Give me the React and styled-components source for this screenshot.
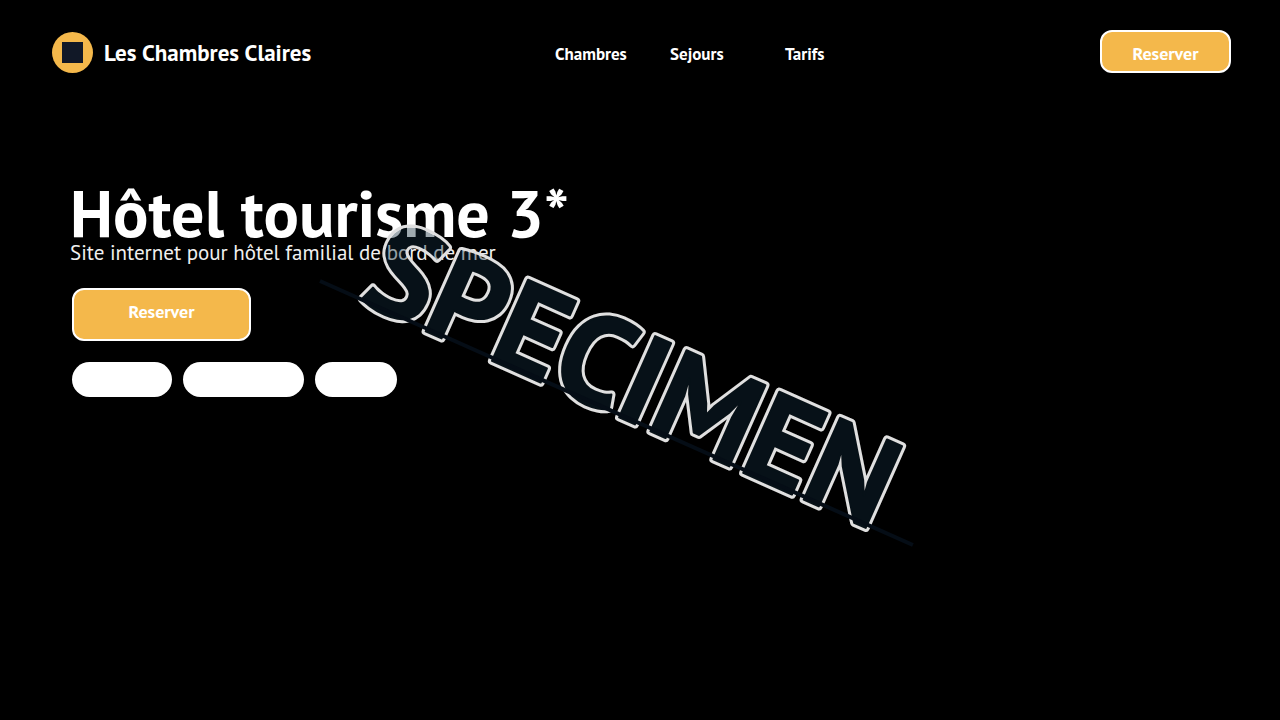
import React from "react";
import styled, { createGlobalStyle } from "styled-components";

const links = ["Chambres", "Sejours", "Tarifs"];
const pills = [100, 121, 82];

export default function App(){
    return (
        <>
            <GlobalStyle />
            <Page>
                <Header>
                    <Brand href="#">
                        <Logo viewBox="0 0 41 41" aria-hidden="true">
                            <circle cx="20.5" cy="20.5" r="20.5" fill="#f4b84b" />
                            <rect x="10" y="10" width="21" height="21" fill="#111827" />
                        </Logo>
                        Les Chambres Claires
                    </Brand>
                    <Nav>
                        {links.map((link) => (
                            <NavLink key={link} href="#">{link}</NavLink>
                        ))}
                    </Nav>
                    <Button $width="131px" $height="43px" $padding="4px 0 0">Reserver</Button>
                </Header>
                <Hero>
                    <Intro>
                        <Title>Hôtel tourisme 3*</Title>
                        <Subtitle>Site internet pour hôtel familial de bord de mer</Subtitle>
                    </Intro>
                    <Button $width="179px" $height="53px" $padding="0 0 6px">Reserver</Button>
                    <Pills>
                        {pills.map((width) => (
                            <Pill key={width} $width={width} />
                        ))}
                    </Pills>
                </Hero>
                <Watermark viewBox="0 0 640 400">
                    <mask id="outline" maskUnits="userSpaceOnUse" x="0" y="-140" width="680" height="180">
                        <use href="#specimen" fill="white" stroke="white" strokeWidth="8" />
                        <use href="#specimen" fill="black" stroke="black" strokeWidth="2" />
                    </mask>
                    <g transform="translate(0 111) rotate(24)">
                        <g opacity="0.4" fill="#122c3c" stroke="#122c3c" strokeWidth="2">
                            <text id="specimen" x="42" y="3">SPECIMEN</text>
                        </g>
                        <rect x="0" y="-140" width="680" height="180" fill="#e0e0e0" mask="url(#outline)" />
                        <line x1="0" y1="0" x2="649" y2="0" />
                    </g>
                </Watermark>
            </Page>
        </>
    )
}

const GlobalStyle = createGlobalStyle`
    body{
        margin: 0;
        background-color: black;
        color: white;
        font-family: "PT Sans", "Open Sans", "Noto Sans", sans-serif;
    }
`;
const Page = styled.div`
    position: relative;
    min-height: 100vh;
    overflow: hidden;
`;
const Header = styled.header`
    display: grid; grid-template-columns: 503px 1fr auto; align-items: end;
    padding: 30px 49px 0 52px;
`;
const Brand = styled.a`
    display: flex; align-items: center; gap: 11px;
    color: white;
    font-size: 23px;
    line-height: 41px;
    font-weight: bold;
    text-decoration: none;
`;
const Logo = styled.svg`
    width: 41px;
    height: 41px;
`;
const Nav = styled.nav`
    display: grid; grid-template-columns: repeat(3, 115px);
    line-height: 38px;
`;
const NavLink = styled.a`
    color: white;
    font-size: 17px;
    font-weight: bold;
    text-decoration: none;
`;
const Button = styled.button`
    box-sizing: border-box;
    width: ${({ $width }) => $width};
    height: ${({ $height }) => $height};
    padding: ${({ $padding }) => $padding};
    border: 2px solid white;
    border-radius: 12px;
    background-color: #f4b84b;
    color: white;
    font-family: inherit;
    font-size: 18px;
    font-weight: bold;
`;
const Hero = styled.main`
    padding: 109px 72px 0;
`;
const Intro = styled.div`
    margin: 0 0 26px -2px;
`;
const Title = styled.h1`
    margin: 0;
    font-size: 66px;
    line-height: 62px;
`;
const Subtitle = styled.p`
    margin: 0;
    color: #f0f0f0;
    font-size: 21px;
    line-height: 18px;
`;
const Pills = styled.div`
    display: flex; gap: 11px;
    margin-top: 21px;
`;
const Pill = styled.span`
    width: ${({ $width }) => $width}px;
    height: 35px;
    border-radius: 18px;
    background-color: white;
`;
const Watermark = styled.svg`
    position: absolute;
    top: 170px; left: 320px;
    width: 640px;
    height: 400px;
    overflow: visible;
    pointer-events: none;

    text{
        font-size: 127px;
        font-weight: bold;
        stroke-linejoin: round;
    }
    line{
        stroke: #050d16;
        stroke-width: 4px;
    }
`;
